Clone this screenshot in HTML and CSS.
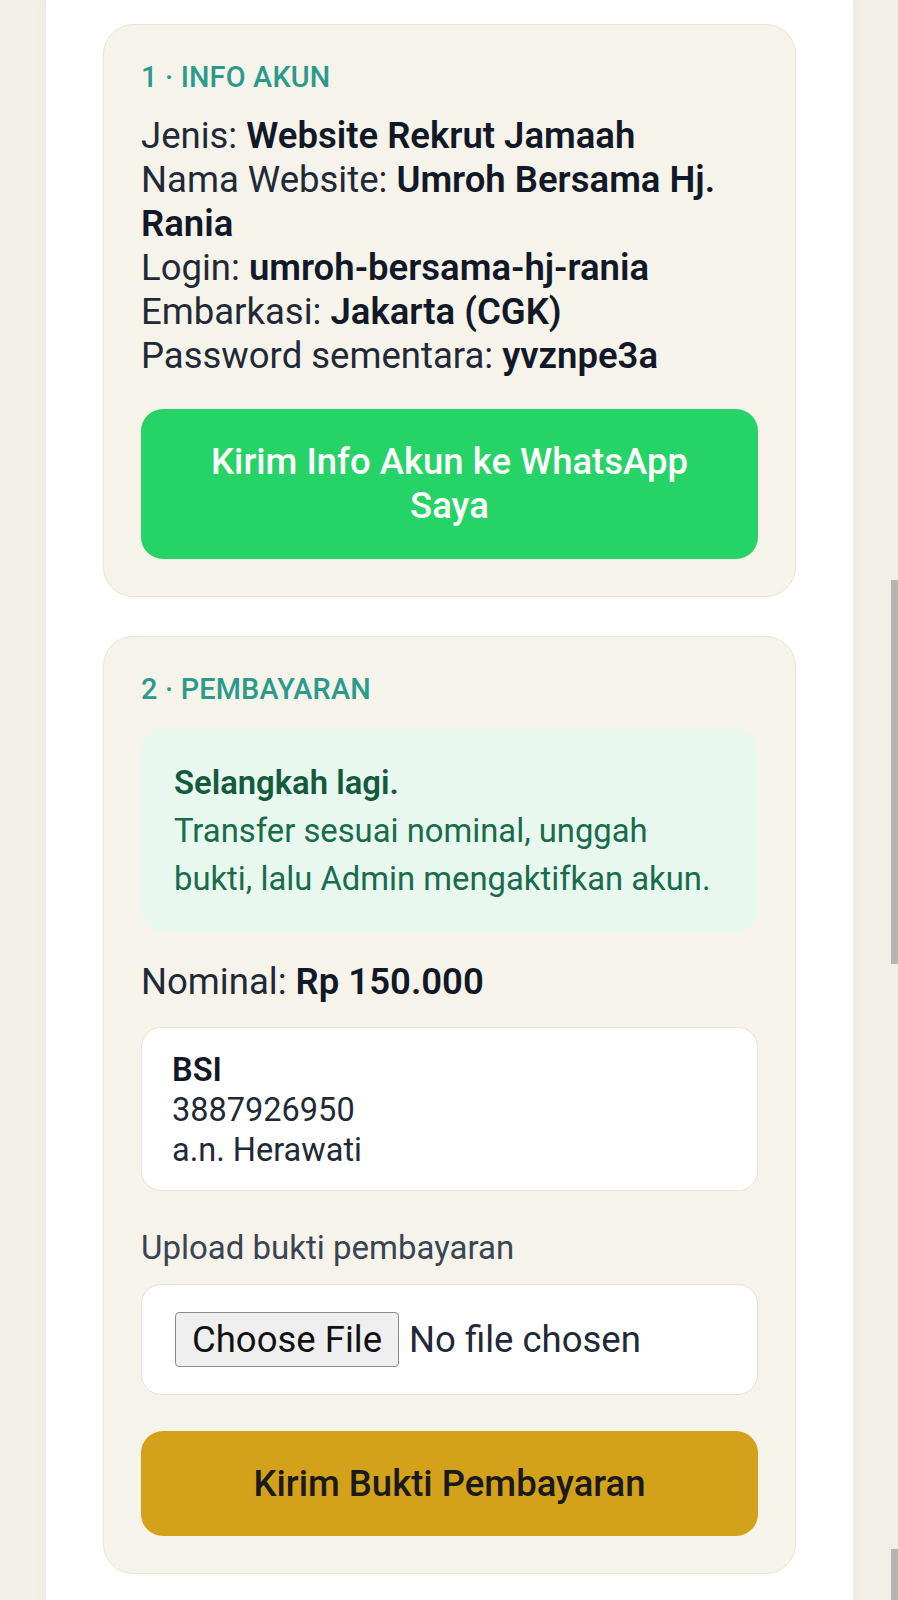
FILE: index.html
```html
<!DOCTYPE html>
<html lang="id">
<head>
<meta charset="utf-8">
<title>Aktivasi Akun</title>
<link rel="stylesheet" href="styles.css">
</head>
<body>
<main class="page">
  <section class="card">
    <h2 class="step">1 · INFO AKUN</h2>
    <div class="info-lines">
      <div>Jenis: <b>Website Rekrut Jamaah</b></div>
      <div>Nama Website: <b>Umroh Bersama Hj. Rania</b></div>
      <div>Login: <b>umroh-bersama-hj-rania</b></div>
      <div>Embarkasi: <b>Jakarta (CGK)</b></div>
      <div>Password sementara: <b>yvznpe3a</b></div>
    </div>
    <button class="btn btn-wa" type="button">Kirim Info Akun ke WhatsApp Saya</button>
  </section>

  <section class="card card-pay">
    <h2 class="step">2 · PEMBAYARAN</h2>
    <div class="notice">
      <div class="notice-title">Selangkah lagi.</div>
      <div class="notice-text">Transfer sesuai nominal, unggah bukti, lalu Admin mengaktifkan akun.</div>
    </div>
    <div class="nominal">Nominal: <b>Rp 150.000</b></div>
    <div class="bank">
      <div class="bank-name">BSI</div>
      <div>3887926950</div>
      <div>a.n. Herawati</div>
    </div>
    <label class="upload-label" for="bukti">Upload bukti pembayaran</label>
    <div class="file-box">
      <input id="bukti" class="file-input" type="file">
    </div>
    <button class="btn btn-pay" type="button">Kirim Bukti Pembayaran</button>
  </section>
</main>
<div class="scroll-ind scroll-ind-a"></div>
<div class="scroll-ind scroll-ind-b"></div>
</body>
</html>
```

FILE: styles.css
```css
* { box-sizing: border-box; }

html, body {
  margin: 0;
  padding: 0;
}

body {
  background: #f2efe7;
  font-family: Roboto, "Noto Sans", "Liberation Sans", sans-serif;
  color: #1f2937;
  min-height: 1600px;
}

.page {
  width: 807px;
  margin-left: 46px;
  min-height: 1600px;
  background: #ffffff;
  padding: 23.5px 57px 40px;
  display: flex;
  flex-direction: column;
  gap: 39px;
  box-shadow: 0 0 10px rgba(120, 110, 80, 0.06);
}

.card {
  background: #f6f3eb;
  border: 1px solid #ebe5d2;
  border-radius: 30px;
  padding: 36px 37px 37px;
  display: flex;
  flex-direction: column;
}

.step {
  margin: 0;
  font-size: 28.8px;
  line-height: 32px;
  font-weight: 500;
  color: #2b9a8b;
  letter-spacing: 0.2px;
}

.info-lines {
  margin-top: 21px;
  font-size: 36.5px;
  line-height: 44px;
  color: #1f2937;
}

.info-lines b {
  font-weight: 600;
  color: #111827;
}

.btn {
  display: block;
  width: 100%;
  border: none;
  font-family: inherit;
  font-size: 36.5px;
  line-height: 44px;
  font-weight: 500;
  border-radius: 22px;
  text-align: center;
}

.btn-wa {
  margin-top: 31.5px;
  padding: 31px 60px;
  background: #26d366;
  color: #ffffff;
}

.notice {
  margin-top: 23px;
  background: #e8f8ef;
  border-radius: 22px;
  padding: 31px 40px 29px 33px;
  font-size: 32.8px;
  line-height: 48px;
  color: #186b4b;
}

.notice-title {
  font-weight: 600;
  color: #145a3e;
}

.nominal {
  margin-top: 28px;
  font-size: 36.5px;
  line-height: 44px;
  color: #1f2937;
}

.nominal b {
  font-weight: 600;
  color: #111827;
}

.bank {
  margin-top: 23px;
  background: #ffffff;
  border: 1px solid #e9e4d6;
  border-radius: 20px;
  padding: 22px 30px 20px;
  font-size: 32.5px;
  line-height: 40px;
  color: #1f2937;
}

.bank-name {
  font-weight: 600;
  color: #111827;
}

.upload-label {
  display: block;
  margin-top: 37px;
  font-size: 33px;
  line-height: 40px;
  color: #3b4452;
}

.file-box {
  margin-top: 16px;
  background: #ffffff;
  border: 1px solid #e6e1d3;
  border-radius: 20px;
  padding: 27px 33px;
}

.file-input {
  display: block;
  width: 100%;
  height: 55px;
  font-family: inherit;
  font-size: 36.5px;
  line-height: 55px;
  color: #1f2937;
}

.file-input::file-selector-button {
  font-family: inherit;
  font-size: 36.5px;
  height: 55px;
  padding: 0 16px;
  margin-right: 10px;
  background: #efefef;
  color: #111111;
  border: 1.5px solid #8a8a8a;
  border-radius: 4px;
}

.btn-pay {
  margin-top: 36px;
  padding: 30.5px 40px;
  background: #d4a11b;
  color: #1a1a1a;
}

.scroll-ind {
  position: fixed;
  right: 0;
  width: 7px;
  background: #b7b5b0;
}

.scroll-ind-a {
  top: 580px;
  height: 384px;
}

.scroll-ind-b {
  top: 1549px;
  height: 51px;
}
```
